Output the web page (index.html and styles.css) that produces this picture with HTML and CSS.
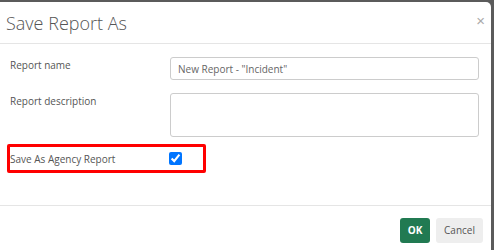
FILE: index.html
```html
<!DOCTYPE html>
<html>
<head>
    <title>Save Report As</title>
    <meta charset="UTF-8">
    <link rel="stylesheet" href="styles.css">
</head>
<body>
    <div class="modal">
        <div class="modal-header">
            <h4 class="modal-title">Save Report As</h4>
            <button class="close">&times;</button>
        </div>
        <div class="modal-body">
            <div class="row">
                <label class="row-label" for="reportName">Report name</label>
                <input type="text" id="reportName" class="field" value="New Report - &quot;Incident&quot;">
            </div>
            <div class="row">
                <label class="row-label" for="reportDesc">Report description</label>
                <textarea id="reportDesc" class="field area"></textarea>
            </div>
            <div class="agency">
                <label class="agency-label" for="agency">Save As Agency Report</label>
                <input type="checkbox" id="agency" class="check" checked>
            </div>
        </div>
        <div class="modal-footer">
            <button class="btn btn-ok">OK</button>
            <button class="btn btn-cancel">Cancel</button>
        </div>
    </div>
</body>
</html>
```

FILE: styles.css
```css
/* caixa de dialogo sobre o fundo escuro */
body {
    margin: 0;
    background-color: #5b5b5b;
    font-family: "Open Sans", Arial, sans-serif;
    font-size: 10px;
    color: #555;
    height: 250px;
    overflow: hidden;
}
.modal {
    margin: 2px 3px 0 0;
    height: 248px;
    background-color: #fff;
    border-top-right-radius: 5px;
    display: flex;
    flex-direction: column;
}
.modal-header {
    height: 41px;
    padding: 0 6px 0 6px;
    border-bottom: 1px solid #e5e5e5;
    display: flex;
    align-items: center;
    justify-content: space-between;
}
.modal-title {
    margin: 0;
    font-size: 18px;
    font-weight: 300;
    color: #555;
    padding-top: 1px;
}
.close {
    border: none;
    background: none;
    padding: 0;
    font-size: 15px;
    font-weight: 300;
    color: #aaa;
    line-height: 1;
    cursor: pointer;
    margin-top: -4px;
}
.modal-body {
    flex: 1;
    padding: 13px 12px 0 7px;
}
.row {
    display: flex;
    align-items: flex-start;
    margin-bottom: 13px;
}
.row-label {
    width: 160px;
    padding: 1px 0 0 3px;
}
.field {
    flex: 1;
    box-sizing: border-box;
    height: 23px;
    margin: 0;
    padding: 2px 7px;
    border: 1px solid #ccc;
    border-radius: 3px;
    font-family: inherit;
    font-size: 10px;
    color: #666;
}
.area {
    height: 44px;
    resize: none;
}
.agency {
    width: 193px;
    height: 23px;
    margin-top: -6px;
    border: 3px solid #f00;
    border-radius: 2px;
    display: flex;
    align-items: center;
}
.agency-label {
    width: 157px;
    color: #555;
}
.check {
    width: 13px;
    height: 13px;
    margin: 0 0 0 2px;
    accent-color: #0075ff;
}
.modal-footer {
    height: 44px;
    border-top: 1px solid #e5e5e5;
    display: flex;
    align-items: center;
    justify-content: flex-end;
    gap: 6px;
    padding: 0 8px 0 0;
}
.btn {
    height: 25px;
    border: none;
    border-radius: 3px;
    font-family: inherit;
    font-size: 10px;
    cursor: pointer;
    margin-top: 4px;
}
.btn-ok {
    width: 30px;
    background-color: #217a52;
    color: #fff;
    font-weight: 700;
}
.btn-cancel {
    width: 47px;
    background-color: #eee;
    color: #555;
}
```
